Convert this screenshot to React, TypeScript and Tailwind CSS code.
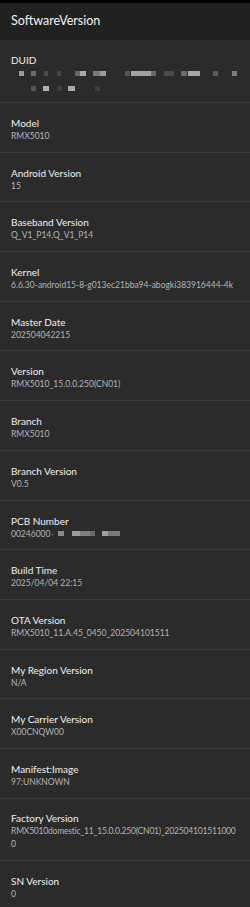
import React from "react";

type Item = { label: string; value: React.ReactNode };

const Blur = ({ blocks }: { blocks: [number, number, string][] }) => (
  <div className="relative h-[5px] w-full">
    {blocks.map(([x, w, c], i) => (
      <div
        key={i}
        className="absolute top-0 h-[5px]"
        style={{ left: x - 11, width: w, background: c }}
      />
    ))}
  </div>
);

const items: Item[] = [
  { label: "Model", value: "RMX5010" },
  { label: "Android Version", value: "15" },
  { label: "Baseband Version", value: "Q_V1_P14,Q_V1_P14" },
  { label: "Kernel", value: "6.6.30-android15-8-g013ec21bba94-abogki383916444-4k" },
  { label: "Master Date", value: "202504042215" },
  { label: "Version", value: "RMX5010_15.0.0.250(CN01)" },
  { label: "Branch", value: "RMX5010" },
  { label: "Branch Version", value: "V0.5" },
  {
    label: "PCB Number",
    value: (
      <span className="flex items-center">
        <span>00246000</span>
        <span className="ml-[1px] text-[#888]">·</span>
        <span className="ml-[4px] inline-block h-[5px] w-[6px] bg-[#8a8a8a]" />
        <span className="ml-[8px] inline-block h-[5px] w-[8px] bg-[#9a9a9a]" />
        <span className="inline-block h-[5px] w-[10px] bg-[#7d7d7d]" />
        <span className="inline-block h-[5px] w-[5px] bg-[#6a6a6a]" />
        <span className="ml-[7px] inline-block h-[5px] w-[6px] bg-[#a0a0a0]" />
        <span className="inline-block h-[5px] w-[12px] bg-[#7a7a7a]" />
      </span>
    ),
  },
  { label: "Build Time", value: "2025/04/04 22:15" },
  { label: "OTA Version", value: "RMX5010_11.A.45_0450_202504101511" },
  { label: "My Region Version", value: "N/A" },
  { label: "My Carrier Version", value: "X00CNQW00" },
  { label: "Manifest:Image", value: "97:UNKNOWN" },
];

const font = { fontFamily: "Lato, 'Noto Sans', sans-serif" };

export default function App() {
  return (
    <div className="w-[250px] h-[907px] overflow-hidden bg-[#2b2b2b]" style={font}>
      <div className="h-[3px] bg-black" />
      <div className="h-[37px] bg-[#212121] flex items-center px-[11px]">
        <span className="text-[12.5px] text-[#f2f2f2] leading-none">SoftwareVersion</span>
      </div>
      <div className="h-[1px] bg-[#2b2b2b]" />
      {/* DUID */}
      <div className="px-[11px] pt-[12px] pb-[11px] border-b border-[#3a3a3a]">
        <div className="text-[10px] leading-[14px] text-[#efefef]">DUID</div>
        <div className="mt-[4px]">
          <Blur
            blocks={[
              [19, 5, "#9c9c9c"],
              [31, 5, "#6c6c6c"],
              [44, 4, "#4a4a4a"],
              [57, 4, "#454545"],
              [75, 5, "#666"],
              [80, 6, "#a9a9a9"],
              [93, 7, "#7a7a7a"],
              [100, 6, "#9a9a9a"],
              [125, 5, "#555"],
              [131, 20, "#a0a0a0"],
              [151, 5, "#6a6a6a"],
              [164, 10, "#4a4a4a"],
              [181, 6, "#6a6a6a"],
              [188, 12, "#a6a6a6"],
              [213, 5, "#5a5a5a"],
              [232, 5, "#7e7e7e"],
            ]}
          />
        </div>
        <div className="mt-[10px]">
          <Blur
            blocks={[
              [31, 5, "#555"],
              [43, 6, "#b0b0b0"],
              [57, 5, "#3f3f3f"],
              [68, 7, "#a8a8a8"],
              [95, 5, "#3f3f3f"],
            ]}
          />
        </div>
      </div>
      {items.map((it) => (
        <div key={it.label} className="px-[11px] pt-[13px] pb-[9.7px] border-b border-[#3a3a3a]">
          <div className="text-[10px] leading-[14px] text-[#efefef]">{it.label}</div>
          <div className="text-[8.5px] leading-[12px] text-[#b3b3b3] whitespace-nowrap">{it.value}</div>
        </div>
      ))}
      <div className="px-[11px] pt-[12px] pb-[9px] border-b border-[#3a3a3a]">
        <div className="text-[10px] leading-[14px] text-[#efefef]">Factory Version</div>
        <div className="text-[8.5px] leading-[13px] tracking-[-0.2px] text-[#b3b3b3]">
          RMX5010domestic_11_15.0.0.250(CN01)_202504101511000
          <br />0
        </div>
      </div>
      <div className="px-[11px] pt-[13px] pb-[10px]">
        <div className="text-[10px] leading-[14px] text-[#efefef]">SN Version</div>
        <div className="text-[8.5px] leading-[12px] text-[#b3b3b3]">0</div>
      </div>
    </div>
  );
}
